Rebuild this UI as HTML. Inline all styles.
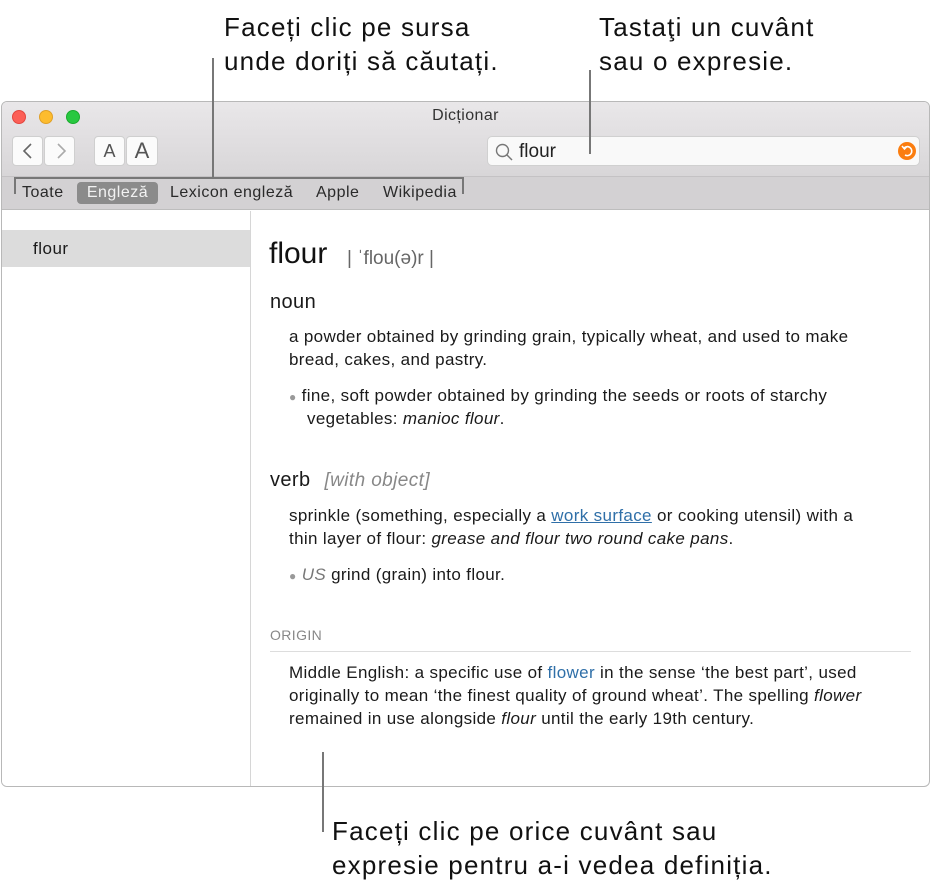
<!DOCTYPE html>
<html><head><meta charset="utf-8"><style>
*{margin:0;padding:0;box-sizing:border-box}
body{width:931px;height:888px;background:#fff;font-family:"Liberation Sans",sans-serif;position:relative;overflow:hidden;color:#1a1a1a}
.a{position:absolute;white-space:nowrap}
.ann{font-size:26px;letter-spacing:1.2px;color:#111;line-height:34px}
.vl{position:absolute;width:2px;background:#777}
.win{position:absolute;left:1px;top:101px;width:929px;height:686px;border:1px solid #b8b8b8;border-radius:6px;overflow:hidden;background:#fff}
.tb{position:absolute;left:0;top:0;width:100%;height:75px;background:linear-gradient(#e9e7e9,#d8d6d8);border-bottom:1px solid #c4c2c4}
.tabs{position:absolute;left:0;top:75px;width:100%;height:33px;background:#d3d1d3;border-bottom:1px solid #bdbdbd}
.dot{position:absolute;top:8px;width:14px;height:14px;border-radius:50%}
.btn{position:absolute;top:34px;height:30px;background:#fbfbfb;border:1px solid #cfcfcf;border-radius:4px;color:#555}
.t{font-size:17px;letter-spacing:0.35px;line-height:20px}
.tab{position:absolute;top:80px;font-size:16px;letter-spacing:0.5px;color:#2a2a2a;line-height:22px}
</style></head><body>
<div class="a ann" style="left:224px;top:10px">Faceți clic pe sursa</div>
<div class="a ann" style="left:224px;top:44px">unde doriți să căutați.</div>
<div class="a ann" style="left:599px;top:10px">Tastaţi un cuvânt</div>
<div class="a ann" style="left:599px;top:44px">sau o expresie.</div>
<div class="a ann" style="left:332px;top:814px">Faceți clic pe orice cuvânt sau</div>
<div class="a ann" style="left:332px;top:848px">expresie pentru a-i vedea definiția.</div>

<div class="win">
 <div class="tb">
  <div class="dot" style="left:10px;background:#fc5f57;border:1px solid #e2463f"></div>
  <div class="dot" style="left:37px;background:#fdbc2e;border:1px solid #e0a028"></div>
  <div class="dot" style="left:64px;background:#28c840;border:1px solid #1aab2d"></div>
  <div class="a" style="left:0;width:100%;text-align:center;top:5px;font-size:16px;letter-spacing:0.4px;color:#333">Dicționar</div>
  <div class="btn" style="left:10px;width:31px"><svg width="31" height="28"><path d="M18 7 L11 14 L18 21" stroke="#666" stroke-width="1.6" fill="none"/></svg></div>
  <div class="btn" style="left:42px;width:31px"><svg width="31" height="28"><path d="M13 7 L20 14 L13 21" stroke="#aaa" stroke-width="1.6" fill="none"/></svg></div>
  <div class="btn" style="left:92px;width:31px;font-size:18px;text-align:center;line-height:28px">A</div>
  <div class="btn" style="left:124px;width:32px;font-size:22px;text-align:center;line-height:28px">A</div>
  <div class="a" style="left:485px;top:34px;width:433px;height:30px;background:#f9f9f9;border:1px solid #d0d0d0;border-radius:5px">
   <svg class="a" style="left:6px;top:5px" width="20" height="20"><circle cx="8.5" cy="8.5" r="6" stroke="#777" stroke-width="1.4" fill="none"/><path d="M13 13 L18 18" stroke="#777" stroke-width="1.5"/></svg>
   <div class="a" style="left:31px;top:4px;font-size:19px;color:#222">flour</div>
   <svg class="a" style="left:410px;top:5px" width="20" height="20"><circle cx="9" cy="9" r="9" fill="#fb7d0f"/><path d="M6 6 A4.5 4.5 0 1 1 7 13" stroke="#fff" stroke-width="1.6" fill="none"/><path d="M4 4 L6.5 7 L9 4.5" stroke="#fff" stroke-width="1.5" fill="none"/></svg>
  </div>
 </div>
 <div class="tabs"></div>
 <div class="tab" style="left:20px">Toate</div>
 <div class="a" style="left:75px;top:80px;width:81px;height:22px;background:#8b8b8b;border-radius:4px;color:#f2f2f2;font-size:16px;letter-spacing:0.5px;text-align:center;line-height:22px">Engleză</div>
 <div class="tab" style="left:168px">Lexicon engleză</div>
 <div class="tab" style="left:314px">Apple</div>
 <div class="tab" style="left:381px">Wikipedia</div>
 <div class="a" style="left:0;top:109px;width:249px;height:577px;border-right:1px solid #d6d6d6;background:#fff"></div>
 <div class="a" style="left:0;top:128px;width:248px;height:37px;background:#dcdcdc"></div>
 <div class="a t" style="left:31px;top:137px;font-size:17px;letter-spacing:0.5px">flour</div>
</div>

<div class="vl" style="left:212px;top:58px;height:120px"></div>
<div class="a" style="left:14px;top:177px;width:450px;height:2px;background:#777"></div>
<div class="vl" style="left:14px;top:177px;height:17px"></div>
<div class="vl" style="left:462px;top:177px;height:17px"></div>
<div class="vl" style="left:589px;top:70px;height:84px"></div>
<div class="vl" style="left:322px;top:752px;height:80px"></div>

<div class="a" style="left:269px;top:237px;font-size:30px;color:#111">flour</div>
<div class="a" style="left:347px;top:248px;font-size:19px;color:#666">| ˈflou(ə)r |</div>
<div class="a" style="left:270px;top:291px;font-size:20px;letter-spacing:0.4px">noun</div>
<div class="a t" style="left:289px;top:327px">a powder obtained by grinding grain, typically wheat, and used to make</div>
<div class="a t" style="left:289px;top:350px">bread, cakes, and pastry.</div>
<div class="a t" style="left:289px;top:386px"><span style="color:#999;font-size:12px">●</span> fine, soft powder obtained by grinding the seeds or roots of starchy</div>
<div class="a t" style="left:307px;top:409px">vegetables: <i>manioc flour</i>.</div>
<div class="a" style="left:270px;top:469px;font-size:20px;letter-spacing:0.4px">verb <i style="color:#888;font-size:19px;margin-left:8px">[with object]</i></div>
<div class="a t" style="left:289px;top:506px">sprinkle (something, especially a <span style="color:#2f6fa8;text-decoration:underline">work surface</span> or cooking utensil) with a</div>
<div class="a t" style="left:289px;top:529px">thin layer of flour: <i>grease and flour two round cake pans</i>.</div>
<div class="a t" style="left:289px;top:565px"><span style="color:#999;font-size:12px">●</span> <i style="color:#777">US</i> grind (grain) into flour.</div>
<div class="a" style="left:270px;top:627px;font-size:14px;letter-spacing:0.4px;color:#888">ORIGIN</div>
<div class="a" style="left:270px;top:651px;width:641px;height:1px;background:#ddd"></div>
<div class="a t" style="left:289px;top:663px">Middle English: a specific use of <span style="color:#2f6fa8">flower</span> in the sense ‘the best part’, used</div>
<div class="a t" style="left:289px;top:686px">originally to mean ‘the finest quality of ground wheat’. The spelling <i>flower</i></div>
<div class="a t" style="left:289px;top:709px">remained in use alongside <i>flour</i> until the early 19th century.</div>
</body></html>
